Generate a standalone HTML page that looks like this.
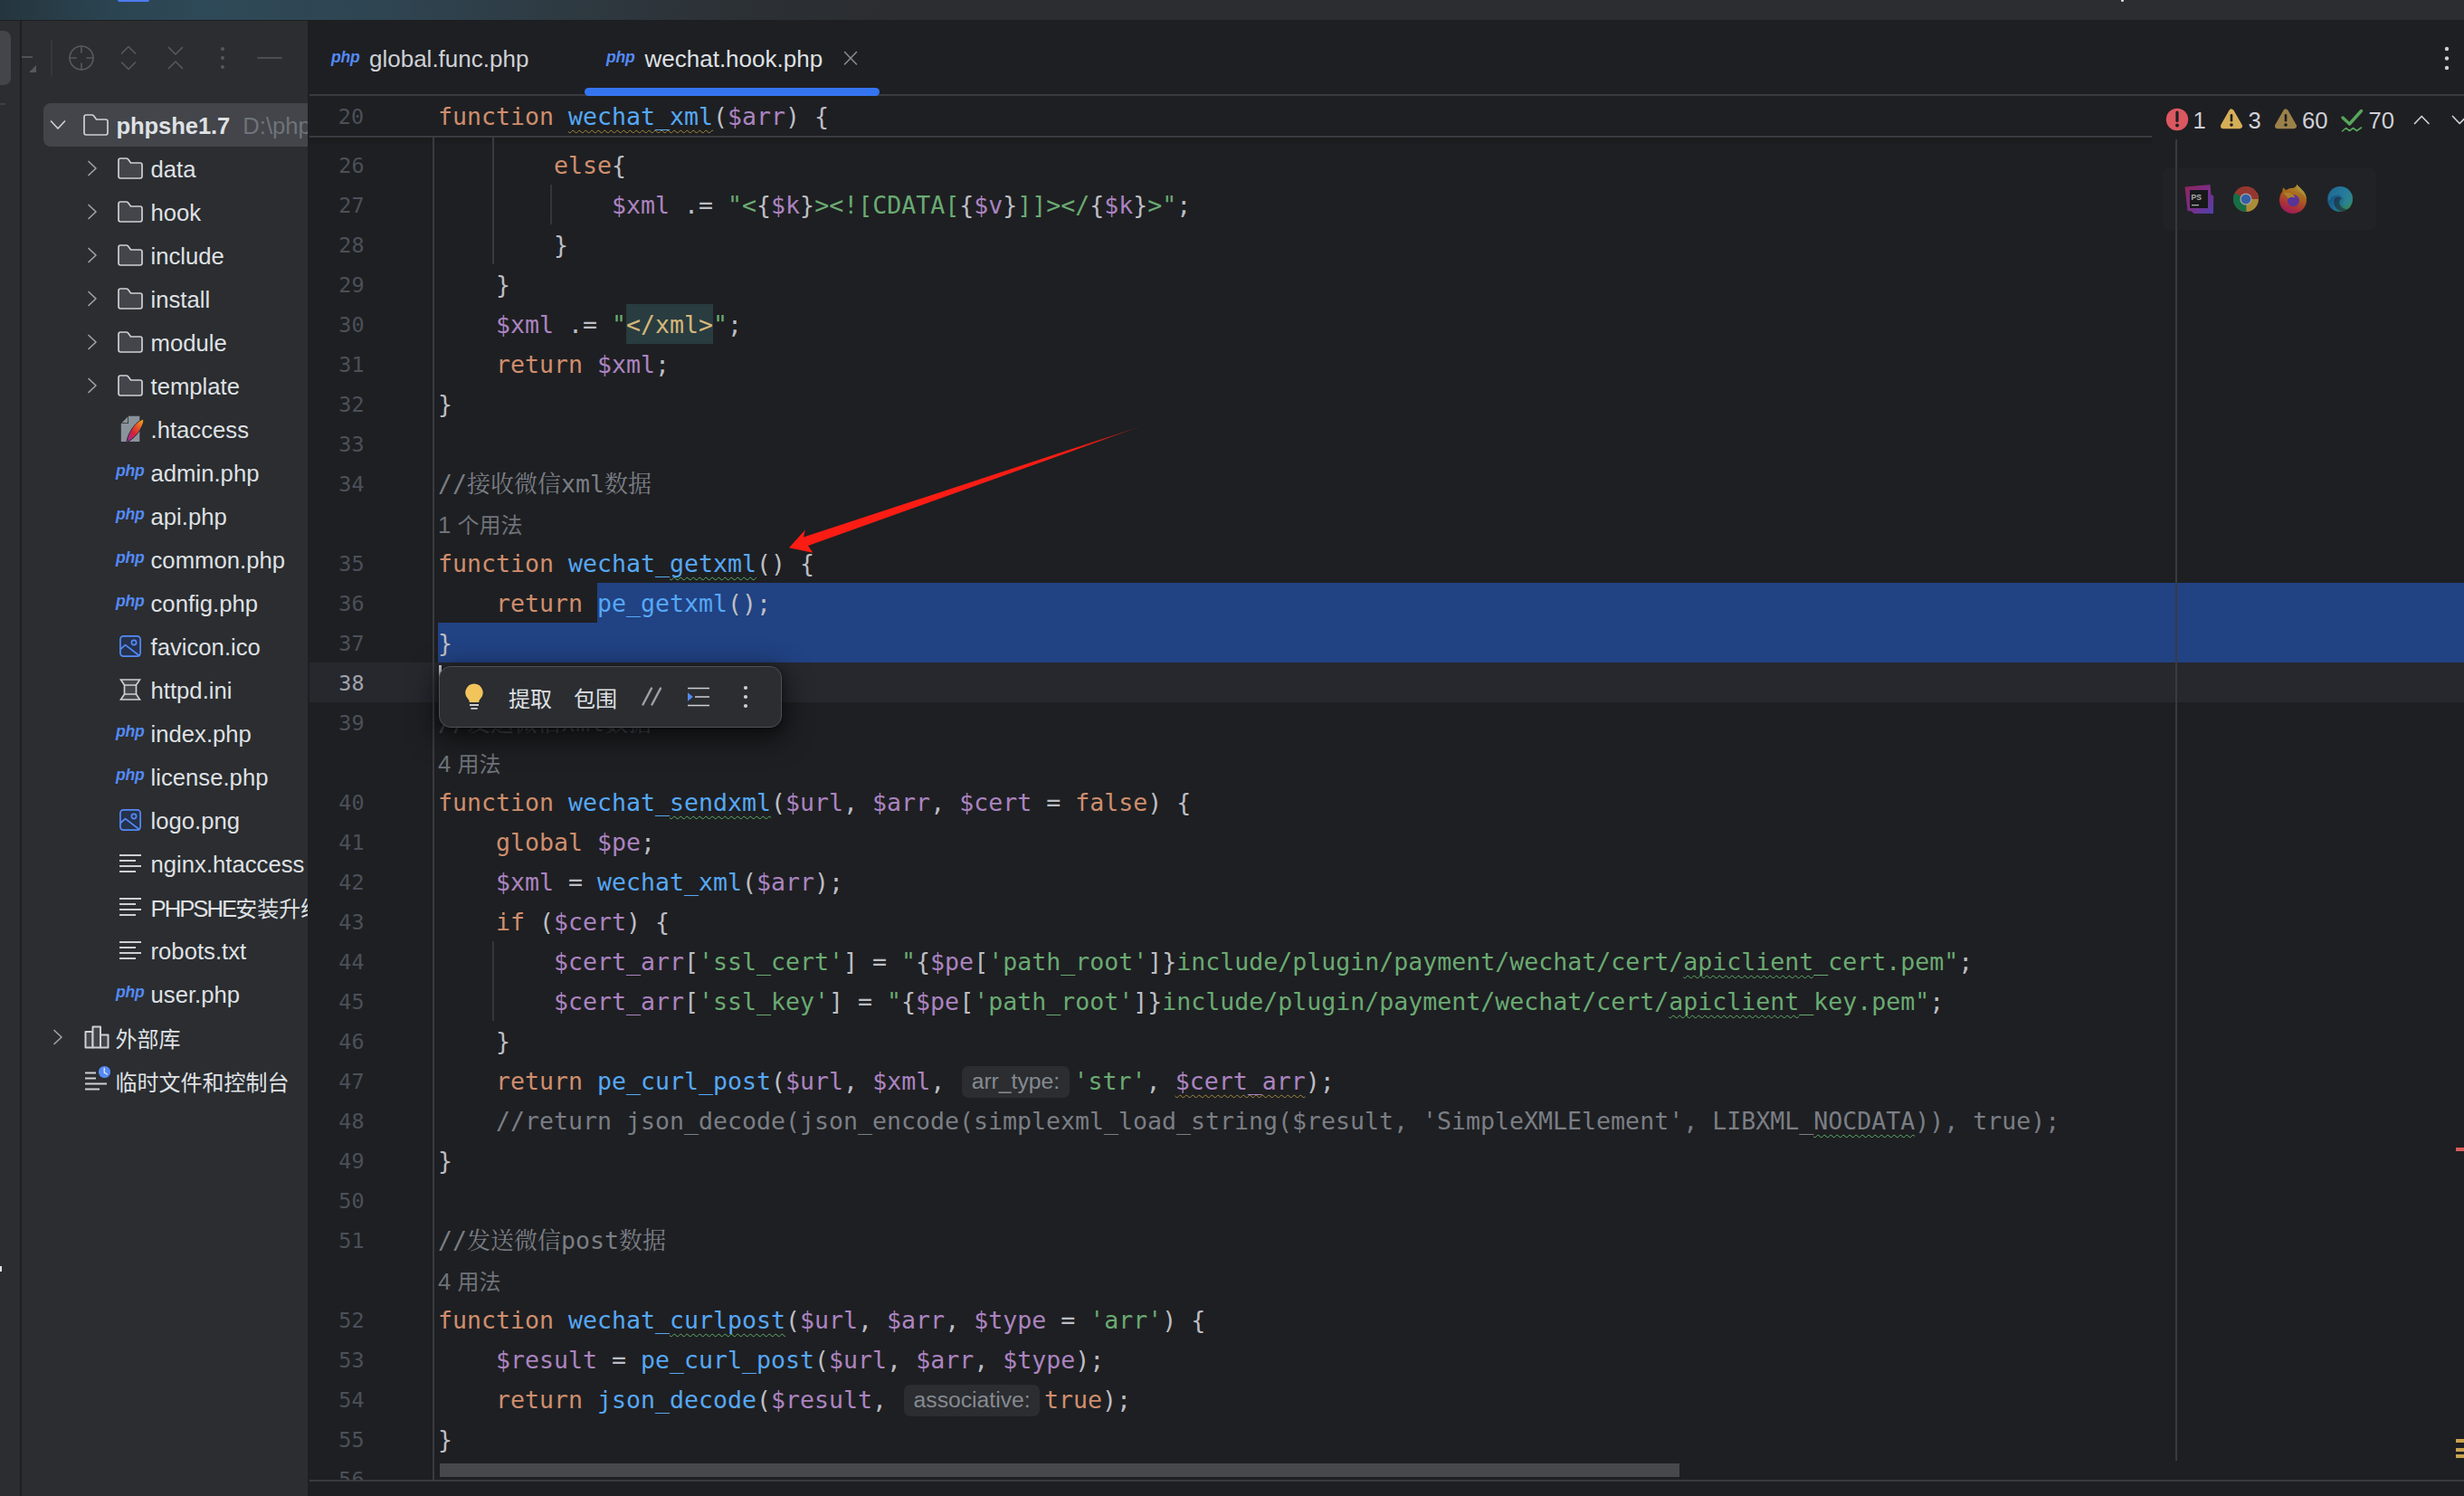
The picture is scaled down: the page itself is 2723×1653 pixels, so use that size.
<!DOCTYPE html><html lang="zh"><head><meta charset="utf-8"><title>PhpStorm</title><style>
*{box-sizing:border-box;margin:0;padding:0}
html,body{width:2723px;height:1653px;overflow:hidden;background:#1e1f22}
body{position:relative;font-family:"Liberation Sans","Noto Sans CJK SC",sans-serif;color:#dfe1e5;-webkit-font-smoothing:antialiased}
.abs{position:absolute}
#top{left:0;top:0;width:2723px;height:22px;background:linear-gradient(90deg,#25353e 0px,#2b4451 120px,#2e4957 230px,#2f4552 420px,#2e3a42 620px,#2c3136 800px,#2b2d30 1000px,#2b2d30 100%)}
#topline{left:0;top:22px;width:2723px;height:1px;background:#1e1f22}
#strip{left:0;top:23px;width:22px;height:1630px;background:#2b2d30}
#stripdiv{left:22px;top:23px;width:2px;height:1630px;background:#1e1f22}
#side{left:24px;top:23px;width:316px;height:1630px;background:#2b2d30;overflow:hidden}
#ed{left:340px;top:23px;width:2383px;height:1630px;background:#1e1f22;overflow:hidden}
.row{position:absolute;left:0;height:48px;line-height:48px;font-size:25.7px;white-space:nowrap;color:#dfe1e5}
.cj{font-family:"Noto Sans CJK SC",sans-serif;font-size:24px}
.php{position:absolute;font:italic bold 17.6px "Liberation Sans",sans-serif;color:#548af7;letter-spacing:-0.2px}
.code{position:absolute;left:0;height:44px;line-height:44px;font-family:"DejaVu Sans Mono","Liberation Mono",monospace;font-size:26.58px;white-space:pre;color:#bcbec4}
.ln{position:absolute;height:44px;line-height:44px;font-family:"DejaVu Sans Mono","Liberation Mono",monospace;font-size:23.4px;color:#4b5059;text-align:right;width:80px}
.k{color:#cf8e6d}.f{color:#56a8f5}.v{color:#ab84c0}.s{color:#6aab73}.c{color:#7a7e85}
.cc{font-family:"Noto Serif CJK SC",serif;font-size:26px;display:inline-block;width:26px;text-align:center;line-height:1}
.hint{position:absolute;height:44px;line-height:44px;font-size:25.7px;color:#6f737a;white-space:nowrap}
.inl{display:inline-block;height:35px;line-height:34px;border-radius:7px;background:#2b2d30;color:#868a91;font-family:"Liberation Sans","Noto Sans CJK SC",sans-serif;font-size:24.7px;padding:0 10.5px;vertical-align:top;margin:5px 5px 0 3px}
.wy{text-decoration:underline wavy #a3883a 1.3px;text-underline-offset:4.5px;text-decoration-skip-ink:none}
.wg{text-decoration:underline wavy #5fae68 1.4px;text-underline-offset:4.5px;text-decoration-skip-ink:none}
</style></head><body>
<div id="top" class="abs"></div><div class="abs" style="left:130px;top:0;width:35px;height:2px;background:#4d7cf0;border-radius:0 0 3px 3px"></div><div id="topline" class="abs"></div>

<div class="abs" style="left:2344px;top:-1px;width:3px;height:3px;border-radius:1.5px;background:#dfe1e5"></div>
<div id="strip" class="abs"></div><div id="stripdiv" class="abs"></div>
<div class="abs" style="left:-8px;top:34px;width:20px;height:60px;border-radius:8px;background:#43454a"></div>
<div class="abs" style="left:0;top:114px;width:6px;height:2px;background:#3c3f45"></div>
<div class="abs" style="left:0;top:1398.5px;width:1.5px;height:6px;background:#dfe1e5"></div>
<div id="side" class="abs">
<svg class="abs" style="left:0;top:0" width="316" height="90" viewBox="24 23 316 90" fill="none" stroke="#55585e" stroke-width="1.7" stroke-linecap="round" stroke-linejoin="round"><path d="M24 63H36" stroke-linecap="butt"/><path d="M40 72V80H32Z" fill="#55585e" stroke="none"/><path d="M57 44V84" stroke="#393b40" stroke-width="1.5"/><circle cx="90" cy="64" r="13"/><path d="M90 51V58M90 70V77M77 64H84M96 64H103"/><path d="M134.5 59L142 51.5L149.5 59M134.5 69L142 76.5L149.5 69"/><path d="M186.5 52.5L194 60L201.5 52.5M186.5 75.5L194 68L201.5 75.5"/><circle cx="246" cy="54" r="2" fill="#55585e" stroke="none"/><circle cx="246" cy="64" r="2" fill="#55585e" stroke="none"/><circle cx="246" cy="74" r="2" fill="#55585e" stroke="none"/><path d="M285 64H311"/></svg>
<div class="abs" style="left:24px;top:91px;width:320px;height:48px;border-radius:8px;background:#43454a"></div>
<svg class="abs" style="left:30px;top:107px" width="20" height="16" viewBox="-10 -8 20 16" fill="none" stroke="#ced0d6" stroke-width="1.7" stroke-linecap="round" stroke-linejoin="round"><path d="M-7.5 -4L0 4L7.5 -4"/></svg>
<svg class="abs" style="left:67px;top:102px" width="30" height="26" viewBox="-1 -1 30 26" fill="#43454a" stroke="#ced0d6" stroke-width="1.7" stroke-linejoin="round"><path d="M1 3.2Q1 1 3.2 1H9.6Q10.8 1 11.6 2L14.6 6H24.8Q27 6 27 8.2V20.8Q27 23 24.8 23H3.2Q1 23 1 20.8Z"/></svg>
<div class="row" style="left:104.5px;top:91.9px;"><b style="font-size:25.6px;letter-spacing:-0.1px">phpshe1.7</b><span style="color:#6f737a;margin-left:14px">D:\phpstudy_pro</span></div>
<svg class="abs" style="left:69.5px;top:153px" width="16" height="20" viewBox="-8 -10 16 20" fill="none" stroke="#9da0a8" stroke-width="1.7" stroke-linecap="round" stroke-linejoin="round"><path d="M-4 -7.5L4 0L-4 7.5"/></svg>
<svg class="abs" style="left:105px;top:150px" width="30" height="26" viewBox="-1 -1 30 26" fill="#43454a" stroke="#ced0d6" stroke-width="1.7" stroke-linejoin="round"><path d="M1 3.2Q1 1 3.2 1H9.6Q10.8 1 11.6 2L14.6 6H24.8Q27 6 27 8.2V20.8Q27 23 24.8 23H3.2Q1 23 1 20.8Z"/></svg>
<div class="row" style="left:142.5px;top:139.9px;">data</div>
<svg class="abs" style="left:69.5px;top:201px" width="16" height="20" viewBox="-8 -10 16 20" fill="none" stroke="#9da0a8" stroke-width="1.7" stroke-linecap="round" stroke-linejoin="round"><path d="M-4 -7.5L4 0L-4 7.5"/></svg>
<svg class="abs" style="left:105px;top:198px" width="30" height="26" viewBox="-1 -1 30 26" fill="#43454a" stroke="#ced0d6" stroke-width="1.7" stroke-linejoin="round"><path d="M1 3.2Q1 1 3.2 1H9.6Q10.8 1 11.6 2L14.6 6H24.8Q27 6 27 8.2V20.8Q27 23 24.8 23H3.2Q1 23 1 20.8Z"/></svg>
<div class="row" style="left:142.5px;top:187.9px;">hook</div>
<svg class="abs" style="left:69.5px;top:249px" width="16" height="20" viewBox="-8 -10 16 20" fill="none" stroke="#9da0a8" stroke-width="1.7" stroke-linecap="round" stroke-linejoin="round"><path d="M-4 -7.5L4 0L-4 7.5"/></svg>
<svg class="abs" style="left:105px;top:246px" width="30" height="26" viewBox="-1 -1 30 26" fill="#43454a" stroke="#ced0d6" stroke-width="1.7" stroke-linejoin="round"><path d="M1 3.2Q1 1 3.2 1H9.6Q10.8 1 11.6 2L14.6 6H24.8Q27 6 27 8.2V20.8Q27 23 24.8 23H3.2Q1 23 1 20.8Z"/></svg>
<div class="row" style="left:142.5px;top:235.9px;">include</div>
<svg class="abs" style="left:69.5px;top:297px" width="16" height="20" viewBox="-8 -10 16 20" fill="none" stroke="#9da0a8" stroke-width="1.7" stroke-linecap="round" stroke-linejoin="round"><path d="M-4 -7.5L4 0L-4 7.5"/></svg>
<svg class="abs" style="left:105px;top:294px" width="30" height="26" viewBox="-1 -1 30 26" fill="#43454a" stroke="#ced0d6" stroke-width="1.7" stroke-linejoin="round"><path d="M1 3.2Q1 1 3.2 1H9.6Q10.8 1 11.6 2L14.6 6H24.8Q27 6 27 8.2V20.8Q27 23 24.8 23H3.2Q1 23 1 20.8Z"/></svg>
<div class="row" style="left:142.5px;top:283.9px;">install</div>
<svg class="abs" style="left:69.5px;top:345px" width="16" height="20" viewBox="-8 -10 16 20" fill="none" stroke="#9da0a8" stroke-width="1.7" stroke-linecap="round" stroke-linejoin="round"><path d="M-4 -7.5L4 0L-4 7.5"/></svg>
<svg class="abs" style="left:105px;top:342px" width="30" height="26" viewBox="-1 -1 30 26" fill="#43454a" stroke="#ced0d6" stroke-width="1.7" stroke-linejoin="round"><path d="M1 3.2Q1 1 3.2 1H9.6Q10.8 1 11.6 2L14.6 6H24.8Q27 6 27 8.2V20.8Q27 23 24.8 23H3.2Q1 23 1 20.8Z"/></svg>
<div class="row" style="left:142.5px;top:331.9px;">module</div>
<svg class="abs" style="left:69.5px;top:393px" width="16" height="20" viewBox="-8 -10 16 20" fill="none" stroke="#9da0a8" stroke-width="1.7" stroke-linecap="round" stroke-linejoin="round"><path d="M-4 -7.5L4 0L-4 7.5"/></svg>
<svg class="abs" style="left:105px;top:390px" width="30" height="26" viewBox="-1 -1 30 26" fill="#43454a" stroke="#ced0d6" stroke-width="1.7" stroke-linejoin="round"><path d="M1 3.2Q1 1 3.2 1H9.6Q10.8 1 11.6 2L14.6 6H24.8Q27 6 27 8.2V20.8Q27 23 24.8 23H3.2Q1 23 1 20.8Z"/></svg>
<div class="row" style="left:142.5px;top:379.9px;">template</div>
<svg class="abs" style="left:108px;top:435px" width="30" height="32" viewBox="132 458 30 32"><defs><linearGradient id="fe" x1="0.9" y1="0" x2="0.1" y2="1"><stop offset="0" stop-color="#f9a21b"/><stop offset="0.3" stop-color="#ea5a24"/><stop offset="0.6" stop-color="#d5203a"/><stop offset="0.85" stop-color="#b0257f"/><stop offset="1" stop-color="#7c2d91"/></linearGradient></defs><path d="M142 459.7H154.3V488H133.8V468Z" fill="#8a939b"/><path d="M133.8 468H142V459.7Z" fill="#2b2d30"/><path d="M134.6 467.2H141.2V460.6Z" fill="#8a939b"/><path d="M158.6 463.6C159.3 466 157.6 470 155 474.5C152 479.8 147 485 140.6 488.8C139.6 489.2 139.6 488.4 140 487.5C141 482 144 476 147.5 471.5C151 467 156 463 158.6 463.6Z" fill="url(#fe)" stroke="#2b2d30" stroke-width="1"/></svg>
<div class="row" style="left:142.5px;top:427.9px;">.htaccess</div>
<div class="php" style="left:104px;top:484.8px;line-height:24px">php</div>
<div class="row" style="left:142.5px;top:475.9px;">admin.php</div>
<div class="php" style="left:104px;top:532.8px;line-height:24px">php</div>
<div class="row" style="left:142.5px;top:523.9px;">api.php</div>
<div class="php" style="left:104px;top:580.8px;line-height:24px">php</div>
<div class="row" style="left:142.5px;top:571.9px;">common.php</div>
<div class="php" style="left:104px;top:628.8px;line-height:24px">php</div>
<div class="row" style="left:142.5px;top:619.9px;">config.php</div>
<svg class="abs" style="left:108px;top:679px" width="24" height="24" viewBox="0 0 24 24" fill="none" stroke="#548af7" stroke-width="1.7" stroke-linejoin="round" stroke-linecap="round"><rect x="0.9" y="0.9" width="22.2" height="22.2" rx="3.5" fill="#25324d"/><circle cx="16" cy="8" r="2.6"/><path d="M1 15.5L6.5 10.6L22 22.5"/></svg>
<div class="row" style="left:142.5px;top:667.9px;">favicon.ico</div>
<svg class="abs" style="left:108px;top:727px" width="24" height="24" viewBox="0 0 24 24" fill="#43454a" stroke="#ced0d6" stroke-width="1.7" stroke-linejoin="miter"><path d="M1.5 1H22.5L18.5 7V17L22.5 23H1.5L5.5 17V7Z"/><path d="M5.5 7H18.5M5.5 17H18.5" fill="none"/></svg>
<div class="row" style="left:142.5px;top:715.9px;">httpd.ini</div>
<div class="php" style="left:104px;top:772.8px;line-height:24px">php</div>
<div class="row" style="left:142.5px;top:763.9px;">index.php</div>
<div class="php" style="left:104px;top:820.8px;line-height:24px">php</div>
<div class="row" style="left:142.5px;top:811.9px;">license.php</div>
<svg class="abs" style="left:108px;top:871px" width="24" height="24" viewBox="0 0 24 24" fill="none" stroke="#548af7" stroke-width="1.7" stroke-linejoin="round" stroke-linecap="round"><rect x="0.9" y="0.9" width="22.2" height="22.2" rx="3.5" fill="#25324d"/><circle cx="16" cy="8" r="2.6"/><path d="M1 15.5L6.5 10.6L22 22.5"/></svg>
<div class="row" style="left:142.5px;top:859.9px;">logo.png</div>
<svg class="abs" style="left:108px;top:919px" width="24" height="24" viewBox="0 0 24 24" fill="none" stroke="#ced0d6" stroke-width="2" shape-rendering="crispEdges"><path d="M0 3H24M0 9H18M0 15H24M0 21H18"/></svg>
<div class="row" style="left:142.5px;top:907.9px;">nginx.htaccess</div>
<svg class="abs" style="left:108px;top:967px" width="24" height="24" viewBox="0 0 24 24" fill="none" stroke="#ced0d6" stroke-width="2" shape-rendering="crispEdges"><path d="M0 3H24M0 9H18M0 15H24M0 21H18"/></svg>
<div class="row" style="left:142.5px;top:955.9px;"><span style="letter-spacing:-2px">PHPSHE</span><span class="cj">安装升级说明.txt</span></div>
<svg class="abs" style="left:108px;top:1015px" width="24" height="24" viewBox="0 0 24 24" fill="none" stroke="#ced0d6" stroke-width="2" shape-rendering="crispEdges"><path d="M0 3H24M0 9H18M0 15H24M0 21H18"/></svg>
<div class="row" style="left:142.5px;top:1003.9px;">robots.txt</div>
<div class="php" style="left:104px;top:1060.8px;line-height:24px">php</div>
<div class="row" style="left:142.5px;top:1051.9px;">user.php</div>
<svg class="abs" style="left:31.5px;top:1113px" width="16" height="20" viewBox="-8 -10 16 20" fill="none" stroke="#9da0a8" stroke-width="1.7" stroke-linecap="round" stroke-linejoin="round"><path d="M-4 -7.5L4 0L-4 7.5"/></svg>
<svg class="abs" style="left:69px;top:1110px" width="28" height="26" viewBox="93 1133 28 26" fill="#43454a" stroke="#ced0d6" stroke-width="2" stroke-linejoin="round"><path d="M94.5 1140H102.5V1157.5H94.5Z"/><path d="M102.5 1134.5H111V1157.5H102.5Z"/><path d="M111 1143.5H119.5V1157.5H111Z"/></svg>
<div class="row" style="left:103.5px;top:1099.9px;top:1099.5px"><span class="cj">外部库</span></div>
<svg class="abs" style="left:69px;top:1153px" width="32" height="32" viewBox="93 1176 32 32" fill="none" stroke="#ced0d6" stroke-width="2"><path d="M94 1185.5H106M94 1191.5H106M94 1197.5H118M94 1203.5H110"/><circle cx="115.5" cy="1184.5" r="7.2" fill="#548af7" stroke="#2b2d30" stroke-width="1.2"/><path d="M115.3 1180.5V1185L118.3 1187" stroke="#dfe1e5" stroke-width="1.5" stroke-linecap="round"/></svg>
<div class="row" style="left:103.5px;top:1147.9px;top:1147.5px"><span class="cj">临时文件和控制台</span></div>
</div>
<div id="ed" class="abs">
<div class="abs" style="left:2px;top:81px;width:2723px;height:2px;background:#393b40"></div>
<div class="php" style="left:26px;top:28px;line-height:24px">php</div>
<div class="row" style="left:68px;top:18px;color:#ced0d6;font-size:26px">global.func.php</div>
<div class="php" style="left:330px;top:28px;line-height:24px">php</div>
<div class="row" style="left:372.5px;top:18px;color:#dfe1e5;font-size:26px">wechat.hook.php</div>
<svg class="abs" style="left:591px;top:32px" width="18" height="18" viewBox="0 0 18 18" stroke="#868a91" stroke-width="1.6" stroke-linecap="round"><path d="M2.5 2.5L15.5 16M15.5 2.5L2.5 16"/></svg>
<div class="abs" style="left:306px;top:74px;width:326px;height:8.5px;border-radius:4.5px;background:#3574f0"></div>
<svg class="abs" style="left:2355px;top:22px" width="20" height="40" viewBox="2695 45 20 40" fill="#ced0d6"><circle cx="2704" cy="54" r="2.2"/><circle cx="2704" cy="64.5" r="2.2"/><circle cx="2704" cy="75" r="2.2"/></svg>
<div class="abs" style="left:2px;top:127px;width:2036px;height:2px;background:#393b40"></div>
<div class="abs" style="left:2px;top:129px;width:2036px;height:9px;background:linear-gradient(#191a1c,rgba(30,31,34,0))"></div>
<div class="abs" style="left:138.2px;top:129px;width:1.7px;height:1483px;background:#393b40"></div>
<div class="abs" style="left:2064px;top:131px;width:2px;height:1481px;background:#393b40"></div>
<div class="abs" style="left:320px;top:621px;width:2723px;height:44px;background:#214283"></div>
<div class="abs" style="left:144px;top:665px;width:2723px;height:44px;background:#214283"></div>
<div class="abs" style="left:2px;top:709px;width:2723px;height:44px;background:#26282e"></div>
<div class="abs" style="left:138.2px;top:709px;width:1.7px;height:44px;background:#393b40"></div>
<div class="abs" style="left:2064px;top:621px;width:2px;height:132px;background:#393b40"></div>
<div class="abs" style="left:352px;top:313px;width:96px;height:44px;background:#293c40"></div>
<div class="abs" style="left:204.20000000000005px;top:129px;width:1.7px;height:140px;background:#393b40"></div>
<div class="abs" style="left:268.1px;top:181px;width:1.7px;height:44px;background:#34363a"></div>
<div class="abs" style="left:204.20000000000005px;top:1017px;width:1.7px;height:88px;background:#34363a"></div>
<div class="ln" style="left:-18px;top:84px">20</div>
<div class="code" style="left:144px;top:83.5px"><span class="k">function</span> <span class="f wy">wechat_xml</span>(<span class="v">$arr</span>) {</div>
<div class="ln" style="left:-17.5px;top:138px;color:#4b5059">26</div>
<div class="code" style="left:144px;top:137.5px">        <span class="k">else</span>{</div>
<div class="ln" style="left:-17.5px;top:182px;color:#4b5059">27</div>
<div class="code" style="left:144px;top:181.5px">            <span class="v">$xml</span> .= <span class="s">"&lt;</span>{<span class="v">$k</span>}<span class="s">&gt;&lt;![CDATA[</span>{<span class="v">$v</span>}<span class="s">]]&gt;&lt;/</span>{<span class="v">$k</span>}<span class="s">&gt;"</span>;</div>
<div class="ln" style="left:-17.5px;top:226px;color:#4b5059">28</div>
<div class="code" style="left:144px;top:225.5px">        }</div>
<div class="ln" style="left:-17.5px;top:270px;color:#4b5059">29</div>
<div class="code" style="left:144px;top:269.5px">    }</div>
<div class="ln" style="left:-17.5px;top:314px;color:#4b5059">30</div>
<div class="code" style="left:144px;top:313.5px">    <span class="v">$xml</span> .= <span class="s">"</span><span style="color:#d5b778">&lt;/xml&gt;</span><span class="s">"</span>;</div>
<div class="ln" style="left:-17.5px;top:358px;color:#4b5059">31</div>
<div class="code" style="left:144px;top:357.5px">    <span class="k">return</span> <span class="v">$xml</span>;</div>
<div class="ln" style="left:-17.5px;top:402px;color:#4b5059">32</div>
<div class="code" style="left:144px;top:401.5px">}</div>
<div class="ln" style="left:-17.5px;top:446px;color:#4b5059">33</div>
<div class="ln" style="left:-17.5px;top:490px;color:#4b5059">34</div>
<div class="code" style="left:144px;top:489.5px"><span class="c">//<span class="cc">接</span><span class="cc">收</span><span class="cc">微</span><span class="cc">信</span>xml<span class="cc">数</span><span class="cc">据</span></span></div>
<div class="hint" style="left:144px;top:534px">1 <span class="cj">个用法</span></div>
<div class="ln" style="left:-17.5px;top:578px;color:#4b5059">35</div>
<div class="code" style="left:144px;top:577.5px"><span class="k">function</span> <span class="f">wechat_</span><span class="f wg">getxml</span>() {</div>
<div class="ln" style="left:-17.5px;top:622px;color:#4b5059">36</div>
<div class="code" style="left:144px;top:621.5px">    <span class="k">return</span> <span class="f">pe_getxml</span>();</div>
<div class="ln" style="left:-17.5px;top:666px;color:#4b5059">37</div>
<div class="code" style="left:144px;top:665.5px">}</div>
<div class="ln" style="left:-17.5px;top:710px;color:#a1a3ab">38</div>
<div class="ln" style="left:-17.5px;top:754px;color:#4b5059">39</div>
<div class="code" style="left:144px;top:753.5px"><span class="c" style="opacity:.45">//<span class="cc">发</span><span class="cc">送</span><span class="cc">微</span><span class="cc">信</span>xml<span class="cc">数</span><span class="cc">据</span></span></div>
<div class="hint" style="left:144px;top:798px">4 <span class="cj">用法</span></div>
<div class="ln" style="left:-17.5px;top:842px;color:#4b5059">40</div>
<div class="code" style="left:144px;top:841.5px"><span class="k">function</span> <span class="f">wechat_</span><span class="f wg">sendxml</span>(<span class="v">$url</span>, <span class="v">$arr</span>, <span class="v">$cert</span> = <span class="k">false</span>) {</div>
<div class="ln" style="left:-17.5px;top:886px;color:#4b5059">41</div>
<div class="code" style="left:144px;top:885.5px">    <span class="k">global</span> <span class="v">$pe</span>;</div>
<div class="ln" style="left:-17.5px;top:930px;color:#4b5059">42</div>
<div class="code" style="left:144px;top:929.5px">    <span class="v">$xml</span> = <span class="f">wechat_xml</span>(<span class="v">$arr</span>);</div>
<div class="ln" style="left:-17.5px;top:974px;color:#4b5059">43</div>
<div class="code" style="left:144px;top:973.5px">    <span class="k">if</span> (<span class="v">$cert</span>) {</div>
<div class="ln" style="left:-17.5px;top:1018px;color:#4b5059">44</div>
<div class="code" style="left:144px;top:1017.5px">        <span class="v">$cert_arr</span>[<span class="s">'ssl_cert'</span>] = <span class="s">"</span>{<span class="v">$pe</span>[<span class="s">'path_root'</span>]}<span class="s">include/plugin/payment/wechat/cert/</span><span class="s wg">apiclient</span><span class="s">_cert.pem"</span>;</div>
<div class="ln" style="left:-17.5px;top:1062px;color:#4b5059">45</div>
<div class="code" style="left:144px;top:1061.5px">        <span class="v">$cert_arr</span>[<span class="s">'ssl_key'</span>] = <span class="s">"</span>{<span class="v">$pe</span>[<span class="s">'path_root'</span>]}<span class="s">include/plugin/payment/wechat/cert/</span><span class="s wg">apiclient</span><span class="s">_key.pem"</span>;</div>
<div class="ln" style="left:-17.5px;top:1106px;color:#4b5059">46</div>
<div class="code" style="left:144px;top:1105.5px">    }</div>
<div class="ln" style="left:-17.5px;top:1150px;color:#4b5059">47</div>
<div class="code" style="left:144px;top:1149.5px">    <span class="k">return</span> <span class="f">pe_curl_post</span>(<span class="v">$url</span>, <span class="v">$xml</span>, <span class="inl">arr_type:</span><span class="s">'str'</span>, <span class="v wy">$cert_arr</span>);</div>
<div class="ln" style="left:-17.5px;top:1194px;color:#4b5059">48</div>
<div class="code" style="left:144px;top:1193.5px">    <span class="c">//return json_decode(json_encode(simplexml_load_string($result, 'SimpleXMLElement', LIBXML_<span class="wg">NOCDATA</span>)), true);</span></div>
<div class="ln" style="left:-17.5px;top:1238px;color:#4b5059">49</div>
<div class="code" style="left:144px;top:1237.5px">}</div>
<div class="ln" style="left:-17.5px;top:1282px;color:#4b5059">50</div>
<div class="ln" style="left:-17.5px;top:1326px;color:#4b5059">51</div>
<div class="code" style="left:144px;top:1325.5px"><span class="c">//<span class="cc">发</span><span class="cc">送</span><span class="cc">微</span><span class="cc">信</span>post<span class="cc">数</span><span class="cc">据</span></span></div>
<div class="hint" style="left:144px;top:1370px">4 <span class="cj">用法</span></div>
<div class="ln" style="left:-17.5px;top:1414px;color:#4b5059">52</div>
<div class="code" style="left:144px;top:1413.5px"><span class="k">function</span> <span class="f">wechat_</span><span class="f wg">curlpost</span>(<span class="v">$url</span>, <span class="v">$arr</span>, <span class="v">$type</span> = <span class="s">'arr'</span>) {</div>
<div class="ln" style="left:-17.5px;top:1458px;color:#4b5059">53</div>
<div class="code" style="left:144px;top:1457.5px">    <span class="v">$result</span> = <span class="f">pe_curl_post</span>(<span class="v">$url</span>, <span class="v">$arr</span>, <span class="v">$type</span>);</div>
<div class="ln" style="left:-17.5px;top:1502px;color:#4b5059">54</div>
<div class="code" style="left:144px;top:1501.5px">    <span class="k">return</span> <span class="f">json_decode</span>(<span class="v">$result</span>, <span class="inl">associative:</span><span class="k">true</span>);</div>
<div class="ln" style="left:-17.5px;top:1546px;color:#4b5059">55</div>
<div class="code" style="left:144px;top:1545.5px">}</div>
<div class="ln" style="left:-17.5px;top:1590px;color:#4b5059">56</div>
<div class="abs" style="left:144.5px;top:712px;width:3.5px;height:39px;background:#ced0d6"></div>
<div class="abs" style="left:139.5px;top:1591px;width:2723px;height:21px;background:#1e1f22"></div>
<div class="abs" style="left:146px;top:1594px;width:1370px;height:15px;background:#47484b"></div>
<div class="abs" style="left:2px;top:1612px;width:2723px;height:1.5px;background:#393b40"></div>
<div class="abs" style="left:0px;top:1613.5px;width:2723px;height:20px;background:#1e1f22"></div>
<div class="abs" style="left:2374px;top:1245px;width:10px;height:4px;background:#db5c5c"></div>
<div class="abs" style="left:2374px;top:1567px;width:10px;height:4px;background:#c9a24d"></div>
<div class="abs" style="left:2374px;top:1577px;width:10px;height:4px;background:#c9a24d"></div>
<div class="abs" style="left:2374px;top:1583.5px;width:10px;height:4px;background:#c9a24d"></div>
<div class="abs" style="left:2038px;top:83px;width:400px;height:48px;background:#1e1f22"></div>
<svg class="abs" style="left:2040px;top:87px" width="343" height="44" viewBox="2380 110 343 44"><circle cx="2406" cy="132" r="12.2" fill="#db5860"/><path d="M2406 124V133.5" stroke="#1e1f22" stroke-width="3.2" stroke-linecap="round"/><circle cx="2406" cy="138.6" r="2" fill="#1e1f22"/><path d="M2466 123.5L2475 139.2H2457Z" fill="#d6ae58" stroke="#d6ae58" stroke-width="6" stroke-linejoin="round"/><path d="M2466 127.2V133.2" stroke="#1e1f22" stroke-width="2.6" stroke-linecap="round"/><circle cx="2466" cy="138" r="1.8" fill="#1e1f22"/><path d="M2526 123.5L2535 139.2H2517Z" fill="#9b8149" stroke="#9b8149" stroke-width="6" stroke-linejoin="round"/><path d="M2526 127.2V133.2" stroke="#1e1f22" stroke-width="2.6" stroke-linecap="round"/><circle cx="2526" cy="138" r="1.8" fill="#1e1f22"/><path d="M2589 130L2596.5 137L2609.5 122.5" fill="none" stroke="#57a65d" stroke-width="3.4" stroke-linecap="round" stroke-linejoin="round"/><path d="M2588.5 145L2592.5 141.5L2596.5 144.5L2600.5 141.5L2604.5 144.5L2609.5 141" fill="none" stroke="#57a65d" stroke-width="1.6" stroke-linecap="round" stroke-linejoin="round"/><path d="M2668.5 136.5L2676.2 128.5L2684 136.5" fill="none" stroke="#ced0d6" stroke-width="1.7" stroke-linecap="round" stroke-linejoin="round"/><path d="M2710.5 128.5L2718.2 136.5L2726 128.5" fill="none" stroke="#ced0d6" stroke-width="1.7" stroke-linecap="round" stroke-linejoin="round"/></svg>
<div class="row" style="left:2083.5px;top:86px;font-size:25.7px;color:#ced0d6">1</div>
<div class="row" style="left:2144.5px;top:86px;font-size:25.7px;color:#ced0d6">3</div>
<div class="row" style="left:2204px;top:86px;font-size:25.7px;color:#ced0d6">60</div>
<div class="row" style="left:2277.5px;top:86px;font-size:25.7px;color:#ced0d6">70</div>
<div class="abs" style="left:2050px;top:163px;width:236px;height:68px;border-radius:7px;background:#212225"></div>
<div class="abs" style="left:2064px;top:163px;width:2px;height:68px;background:#36383c"></div>
<svg class="abs" style="left:2070px;top:175px;opacity:.62" width="200" height="44" viewBox="2410 198 200 44"><defs><linearGradient id="ps" x1="0" y1="0" x2="1" y2="1"><stop offset="0" stop-color="#d6267a"/><stop offset="0.5" stop-color="#b434c4"/><stop offset="1" stop-color="#6b57ff"/></linearGradient><linearGradient id="ffx" x1="0.7" y1="0" x2="0.3" y2="1"><stop offset="0" stop-color="#ffd43b"/><stop offset="0.4" stop-color="#ff8a16"/><stop offset="0.75" stop-color="#ff3647"/><stop offset="1" stop-color="#e31587"/></linearGradient><linearGradient id="edg" x1="0" y1="0.2" x2="1" y2="0.8"><stop offset="0" stop-color="#0c59a4"/><stop offset="0.5" stop-color="#1b9de2"/><stop offset="1" stop-color="#49d668"/></linearGradient></defs><path d="M2414.5 206.5L2442.5 204L2443.5 215L2446.3 216.5L2446 236L2424.5 236L2422 233.5L2417.5 233Z" fill="url(#ps)"/><rect x="2420" y="210" width="20" height="20" fill="#121314"/><text x="2421.5" y="220.5" font-family="Liberation Sans,sans-serif" font-weight="bold" font-size="8.5" fill="#ffffff">PS</text><rect x="2422" y="226" width="8" height="1.3" fill="#fff"/><circle cx="2482" cy="220" r="14" fill="#db4437"/><path d="M2482 220L2469.9 213A14 14 0 0 0 2482.6 234Z" fill="#0f9d58"/><path d="M2482 220L2482.6 234A14 14 0 0 0 2494.1 213Z" fill="#ffcd40"/><path d="M2482 220H2496A14 14 0 0 0 2469.9 213Z" fill="#db4437"/><circle cx="2482" cy="220" r="6.6" fill="#f1f1f1"/><circle cx="2482" cy="220" r="5.3" fill="#4285f4"/><path d="M2538.3 203.8C2540.5 207 2545 209.5 2547.3 214C2549.3 218 2549.6 223 2547.6 227.2C2545 232.8 2539.5 236 2533.8 236C2525.6 236 2519 229.4 2519 221.3C2519 217.6 2520.2 214 2522.4 211.4C2522.2 210 2522.6 208.3 2523.6 207.2C2524.3 208.6 2525.4 209.6 2526.8 210.1C2529 208.2 2532 207.4 2534.6 207.8C2536.6 207 2538 205.5 2538.3 203.8Z" fill="url(#ffx)"/><path d="M2538.3 203.8C2540.5 207 2545 209.5 2547.3 214C2548.3 216 2548.8 218 2548.9 220C2547 215.5 2543.5 213.5 2540.5 211.5C2538.5 210 2537.6 207 2538.3 203.8Z" fill="#ffd84a" opacity=".85"/><circle cx="2534.4" cy="221.6" r="6.6" fill="#7a3fe0"/><path d="M2523.2 213.2C2526 212.3 2530 212.6 2532.8 214.3C2534.6 215.4 2535.8 216.8 2536.3 218.2C2533.5 217.2 2530.5 217.6 2528.6 219.6C2527.8 217 2525.8 214.6 2523.2 213.2Z" fill="#ffbd2e"/><circle cx="2586" cy="220" r="14" fill="url(#edg)"/><path d="M2586 206A14 14 0 0 1 2600 219.5C2600 224.5 2596.5 227 2592.5 227C2589.5 227 2588.5 225.5 2589.5 224C2591 221.5 2590.5 218.5 2588 216.5C2584 213.5 2577 215.5 2573.5 222.5C2571 215 2577 206 2586 206Z" fill="#35c1f1" opacity="0.55"/><path d="M2580.5 218.5C2577.5 224 2580 231 2586.5 233.5C2590.5 234.8 2595 233.5 2598 230C2594 232 2588.5 231 2586 226.5C2584.5 223.8 2585.5 220.5 2588 219C2586 217 2582.5 217 2580.5 218.5Z" fill="#1e1f22" opacity="0.55"/></svg>
<svg class="abs" style="left:520px;top:437px" width="420" height="160" viewBox="860 460 420 160"><defs><linearGradient id="ar" gradientUnits="userSpaceOnUse" x1="1269" y1="468" x2="1180" y2="498"><stop offset="0" stop-color="#fb1c14" stop-opacity="0"/><stop offset="0.6" stop-color="#fb1c14" stop-opacity="0.8"/><stop offset="1" stop-color="#fb1c14"/></linearGradient></defs><path d="M872 605.3L889.8 585.5L888 593.5L1269 468.3L893 603L898.4 610.7Z" fill="url(#ar)"/></svg>
<div class="abs" style="left:144.5px;top:713px;width:379px;height:67.5px;border-radius:13px;background:#2b2d30;border:1.5px solid #4e5157;box-shadow:0 8px 28px 6px rgba(0,0,0,.5),0 2px 6px rgba(0,0,0,.35)"></div>
<svg class="abs" style="left:165px;top:725px" width="340" height="44" viewBox="505 748 340 44"><path d="M524 755.5A9.8 9.8 0 0 1 531 772C529.6 773.6 529.3 774.6 529.3 776H518.7C518.7 774.6 518.4 773.6 517 772A9.8 9.8 0 0 1 524 755.5Z" fill="#f2c55c"/><path d="M519 779H529M520.3 782.8H527.7" stroke="#ced0d6" stroke-width="1.8" stroke-linecap="butt"/><path d="M710.5 778.5L720 760.5M720.5 778.5L730 760.5" stroke="#9da0a8" stroke-width="2.4" stroke-linecap="round"/><path d="M760 760.5H784M768 770H784M760 779.5H784" stroke="#ced0d6" stroke-width="1.7"/><path d="M760 765.2L765.8 770L760 774.8Z" fill="#548af7"/><circle cx="824" cy="760" r="2.1" fill="#ced0d6"/><circle cx="824" cy="770" r="2.1" fill="#ced0d6"/><circle cx="824" cy="780" r="2.1" fill="#ced0d6"/></svg>
<div class="row" style="left:222px;top:724px;color:#dfe1e5"><span class="cj">提取</span></div>
<div class="row" style="left:294px;top:724px;color:#dfe1e5"><span class="cj">包围</span></div>
</div>
</body></html>
